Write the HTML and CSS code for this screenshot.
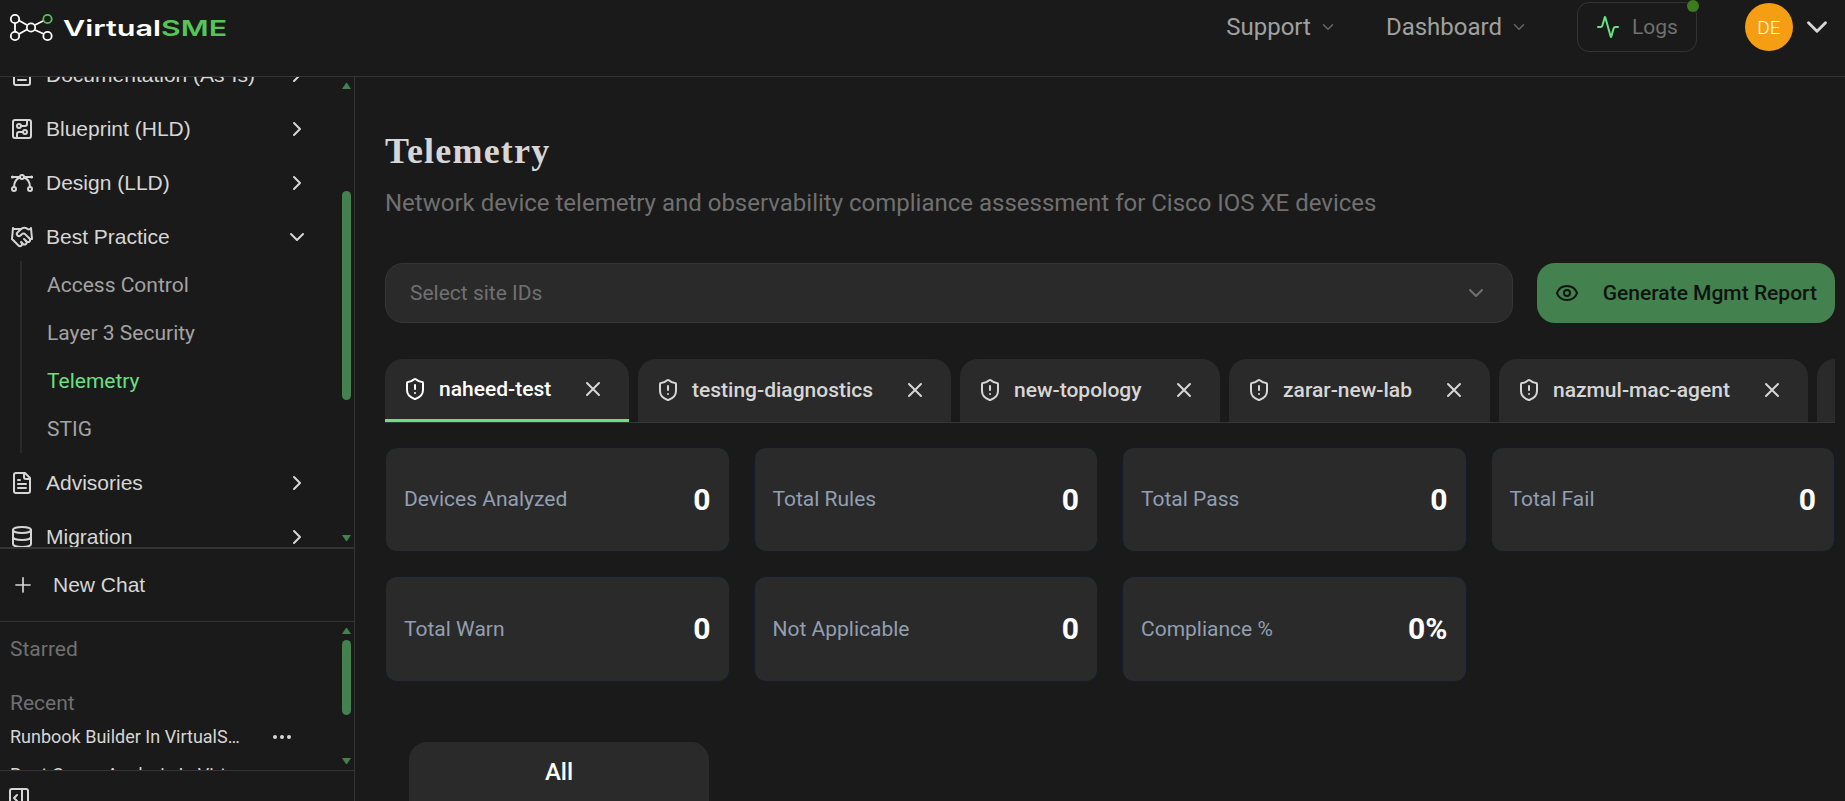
FILE: index.html
```html
<!DOCTYPE html>
<html lang="en">
<head>
<meta charset="utf-8">
<title>VirtualSME</title>
<link rel="stylesheet" href="styles.css">
</head>
<body>
<svg class="defs" aria-hidden="true">
  <symbol id="right" viewBox="0 0 24 24"><path d="m9 18 6-6-6-6"/></symbol>
  <symbol id="down" viewBox="0 0 24 24"><path d="m6 9 6 6 6-6"/></symbol>
  <symbol id="x" viewBox="0 0 24 24"><path d="M18 6 6 18M6 6l12 12"/></symbol>
  <symbol id="file" viewBox="0 0 24 24"><path d="M15 2H6a2 2 0 0 0-2 2v16a2 2 0 0 0 2 2h12a2 2 0 0 0 2-2V7Z"/><path d="M14 2v4a2 2 0 0 0 2 2h4M10 9H8M16 13H8M16 17H8"/></symbol>
  <symbol id="circuit" viewBox="0 0 24 24"><rect width="18" height="18" x="3" y="3" rx="2"/><path d="M11 9h4a2 2 0 0 0 2-2V3"/><circle cx="9" cy="9" r="2"/><path d="M7 21v-4a2 2 0 0 1 2-2h4"/><circle cx="15" cy="15" r="2"/></symbol>
  <symbol id="bezier" viewBox="0 0 24 24"><circle cx="12" cy="6" r="2"/><circle cx="4" cy="18" r="2"/><circle cx="20" cy="18" r="2"/><path d="M2 6h8M14 6h8M4 16c0-5 2-8 6-9.500M20 16c0-5-2-8-6-9.500"/><circle cx="2.500" cy="6" r=".6"/><circle cx="21.500" cy="6" r=".6"/></symbol>
  <symbol id="hands" viewBox="0 0 24 24"><path d="m11 17 2 2a1 1 0 1 0 3-3"/><path d="m14 14 2.500 2.500a1 1 0 1 0 3-3l-3.880-3.880a3 3 0 0 0-4.240 0l-.88.88a1 1 0 1 1-3-3l2.810-2.810a5.790 5.790 0 0 1 7.060-.87l.47.280a2 2 0 0 0 1.420.25L21 4"/><path d="m21 3 1 11h-2M3 3 2 14l6.500 6.500a1 1 0 1 0 3-3M3 4h8"/></symbol>
  <symbol id="db" viewBox="0 0 24 24"><ellipse cx="12" cy="5" rx="9" ry="3"/><path d="M3 5v14a9 3 0 0 0 18 0V5M3 12a9 3 0 0 0 18 0"/></symbol>
  <symbol id="plus" viewBox="0 0 24 24"><path d="M3.500 12h17M12 3.500v17"/></symbol>
  <symbol id="panel" viewBox="0 0 24 24"><rect width="18" height="18" x="3" y="3" rx="2"/><path d="M15 3v18M10 9l-3 3 3 3"/></symbol>
  <symbol id="shield" viewBox="0 0 24 24"><path d="M20 13c0 5-3.500 7.500-7.660 8.950a1 1 0 0 1-.67-.01C7.500 20.500 4 18 4 13V6a1 1 0 0 1 1-1c2 0 4.500-1.200 6.240-2.720a1.170 1.170 0 0 1 1.520 0C14.510 3.810 17 5 19 5a1 1 0 0 1 1 1z"/><path d="M12 8v4M12 16h.01"/></symbol>
  <symbol id="eye" viewBox="0 0 24 24"><path d="M2.062 12.348a1 1 0 0 1 0-.696 10.750 10.750 0 0 1 19.876 0 1 1 0 0 1 0 .696 10.750 10.750 0 0 1-19.876 0"/><circle cx="12" cy="12" r="3"/></symbol>
  <symbol id="pulse" viewBox="0 0 24 24"><path d="M22 12h-2.480a2 2 0 0 0-1.930 1.460l-2.350 8.360a.25.25 0 0 1-.48 0L9.240 2.180a.25.25 0 0 0-.48 0l-2.350 8.360A2 2 0 0 1 4.490 12H2"/></symbol>
</svg>

<header class="header">
  <svg class="logo" viewBox="0 0 230 50" width="230" height="50">
    <g class="mesh"><path d="M15 23v9M19 20.500l8 4.500M19 34l8-4.500M35 25l9-4.500M35 30l9 4"/><circle cx="15" cy="19" r="4.200"/><circle cx="15" cy="36" r="4.200"/><circle cx="31" cy="27.500" r="4.200"/><circle cx="47.500" cy="36" r="4.200"/></g>
    <circle class="mesh mesh-green" cx="47.500" cy="19" r="4.200"/>
    <text class="word" x="63" y="36" textLength="98" lengthAdjust="spacingAndGlyphs">Virtual</text>
    <text class="word word-green" x="161" y="36" textLength="66" lengthAdjust="spacingAndGlyphs">SME</text>
  </svg>
  <nav class="topnav">
    <span class="toplink">Support <svg class="icon i18"><use href="#down"/></svg></span>
    <span class="toplink">Dashboard <svg class="icon i18"><use href="#down"/></svg></span>
    <span class="logs"><svg class="icon pulse"><use href="#pulse"/></svg>Logs<i class="dot"></i></span>
    <span class="avatar">DE</span>
    <svg class="icon caret"><use href="#down"/></svg>
  </nav>
</header>

<div class="body">
  <aside class="sidebar">
    <div class="menu">
      <div class="menu-items">
        <div class="row"><svg class="icon"><use href="#file"/></svg><span>Documentation (As-Is)</span><svg class="icon"><use href="#right"/></svg></div>
        <div class="row"><svg class="icon"><use href="#circuit"/></svg><span>Blueprint (HLD)</span><svg class="icon"><use href="#right"/></svg></div>
        <div class="row"><svg class="icon"><use href="#bezier"/></svg><span>Design (LLD)</span><svg class="icon"><use href="#right"/></svg></div>
        <div class="row"><svg class="icon"><use href="#hands"/></svg><span>Best Practice</span><svg class="icon"><use href="#down"/></svg></div>
        <div class="subs">
          <div class="sub">Access Control</div>
          <div class="sub">Layer 3 Security</div>
          <div class="sub active">Telemetry</div>
          <div class="sub">STIG</div>
        </div>
        <div class="row"><svg class="icon"><use href="#file"/></svg><span>Advisories</span><svg class="icon"><use href="#right"/></svg></div>
        <div class="row"><svg class="icon"><use href="#db"/></svg><span>Migration</span><svg class="icon"><use href="#right"/></svg></div>
      </div>
      <div class="bar bar-menu"><i class="up"></i><i class="thumb"></i><i class="dn"></i></div>
    </div>
    <div class="newchat"><svg class="icon"><use href="#plus"/></svg><span>New Chat</span></div>
    <div class="chats">
      <div class="chat-list">
        <div class="group">Starred</div>
        <div class="group recent">Recent</div>
        <div class="chat"><span>Runbook Builder In VirtualS…</span><svg class="more" viewBox="0 0 20 6"><circle cx="3" cy="3" r="2"/><circle cx="10" cy="3" r="2"/><circle cx="17" cy="3" r="2"/></svg></div>
        <div class="chat"><span>Root Cause Analysis In Virt…</span></div>
      </div>
      <div class="bar bar-chats"><i class="up"></i><i class="thumb"></i><i class="dn"></i></div>
    </div>
    <div class="foot"><svg class="icon"><use href="#panel"/></svg></div>
  </aside>

  <main class="main">
    <h1 class="title">Telemetry</h1>
    <p class="lead">Network device telemetry and observability compliance assessment for Cisco IOS XE devices</p>
    <div class="filters">
      <div class="select"><span>Select site IDs</span><svg class="icon"><use href="#down"/></svg></div>
      <div class="button"><svg class="icon"><use href="#eye"/></svg><span>Generate Mgmt Report</span></div>
    </div>
    <div class="tabs">
      <div class="tab current t1"><svg class="icon"><use href="#shield"/></svg><span>naheed-test</span><svg class="icon close"><use href="#x"/></svg></div>
      <div class="tab t2"><svg class="icon"><use href="#shield"/></svg><span>testing-diagnostics</span><svg class="icon close"><use href="#x"/></svg></div>
      <div class="tab t3"><svg class="icon"><use href="#shield"/></svg><span>new-topology</span><svg class="icon close"><use href="#x"/></svg></div>
      <div class="tab t4"><svg class="icon"><use href="#shield"/></svg><span>zarar-new-lab</span><svg class="icon close"><use href="#x"/></svg></div>
      <div class="tab t5"><svg class="icon"><use href="#shield"/></svg><span>nazmul-mac-agent</span><svg class="icon close"><use href="#x"/></svg></div>
      <div class="tab t6"></div>
    </div>
    <div class="stats">
      <div class="stat"><span>Devices Analyzed</span><b>0</b></div>
      <div class="stat"><span>Total Rules</span><b>0</b></div>
      <div class="stat"><span>Total Pass</span><b>0</b></div>
      <div class="stat"><span>Total Fail</span><b>0</b></div>
      <div class="stat"><span>Total Warn</span><b>0</b></div>
      <div class="stat"><span>Not Applicable</span><b>0</b></div>
      <div class="stat"><span>Compliance %</span><b>0%</b></div>
    </div>
    <div class="all">All</div>
  </main>
</div>
</body>
</html>
```
FILE: styles.css
```css
* { box-sizing: border-box; }
body { margin: 0; height: 801px; overflow: hidden; background: #1a1a1a; color: #d6d6d6; font-family: Roboto, sans-serif; font-size: 21px; display: flex; flex-direction: column; }
.defs { position: absolute; width: 0; height: 0; }
.icon { width: 24px; height: 24px; flex: none; fill: none; stroke: currentColor; stroke-width: 2; stroke-linecap: round; stroke-linejoin: round; }
.header { height: 77px; flex: none; border-bottom: 1px solid #343434; display: flex; justify-content: space-between; align-items: flex-start; }
.logo { display: block; }
.mesh { fill: none; stroke: #fff; stroke-width: 1.8; }
.mesh-green { stroke: #4fc653; }
.word { font-family: Inter, sans-serif; font-weight: 600; font-size: 22px; fill: #fff; }
.word-green { fill: #56c557; }
.topnav { display: flex; align-items: center; height: 52px; padding-top: 2px; padding-right: 11px; }
.toplink { display: flex; align-items: center; gap: 8px; font-size: 24px; color: #a0a0a0; margin-right: 49px; }
.i18 { width: 18px; height: 18px; color: #666; }
.logs { position: relative; display: flex; align-items: center; gap: 12px; width: 120px; height: 50px; padding-left: 18px; border: 1px solid #343434; border-radius: 12px; color: #707070; margin-right: 48px; }
.pulse { color: #68e083; }
.dot { position: absolute; right: -3px; top: -3px; width: 12px; height: 12px; border-radius: 50%; background: #3e7b1d; }
.avatar { width: 48px; height: 48px; border-radius: 50%; background: #f59e13; color: #fff; font-size: 19px; font-weight: 300; display: flex; align-items: center; justify-content: center; margin-right: 7px; }
.caret { width: 34px; height: 34px; }
.body { flex: 1; display: flex; min-height: 0; }
.sidebar { width: 355px; flex: none; border-right: 1px solid #343434; display: flex; flex-direction: column; }
.menu { height: 472px; border-bottom: 2px solid #343434; display: flex; overflow: hidden; flex: none; }
.menu-items { width: 342px; margin-top: -29px; padding: 0 33px 0 10px; flex: none; }
.row { height: 54px; display: flex; align-items: center; font-family: "Liberation Sans", Arial, sans-serif; }
.row span { flex: 1; padding-left: 12px; }
.subs { margin: -3px 0 3px 10px; padding-left: 25px; border-left: 2px solid #2a2a2a; }
.sub { height: 48px; line-height: 48px; color: #a3a3a3; }
.sub.active { color: #68e083; }
.bar { width: 9px; display: flex; flex-direction: column; }
.up { border: 4.500px solid transparent; border-top: 0; border-bottom: 6px solid #43814f; }
.dn { border: 4.500px solid transparent; border-bottom: 0; border-top: 6px solid #43814f; }
.thumb { border-radius: 5px; background: #43814f; }
.bar-menu { padding-top: 6px; }
.bar-menu .thumb { height: 209px; margin: 102px 0 135px; }
.newchat { height: 73px; flex: none; border-bottom: 1px solid #343434; display: flex; align-items: center; padding-left: 13px; gap: 20px; font-family: "Liberation Sans", Arial, sans-serif; }
.newchat .icon { width: 20px; height: 20px; }
.chats { height: 149px; flex: none; border-bottom: 1px solid #343434; display: flex; overflow: hidden; }
.chat-list { width: 342px; flex: none; padding: 0 50px 0 10px; }
.group { height: 54px; line-height: 54px; color: #707070; }
.recent { height: 48px; }
.chat { height: 38px; line-height: 26px; font-size: 18px; display: flex; justify-content: space-between; }
.more { width: 20px; height: 6px; margin-top: 10px; fill: #d6d6d6; }
.bar-chats { padding-top: 6px; }
.bar-chats .thumb { height: 75px; margin: 6px 0 43px; }
.foot { padding: 15px 7px; }
.main { flex: 1; min-width: 0; padding: 54px 10px 0 30px; overflow: hidden; }
.title { margin: 0; font: 700 36px/40px "Liberation Serif", serif; letter-spacing: 1.2px; }
.lead { margin: 16px 0 0; font-size: 24px; line-height: 32px; color: #707070; }
.filters { display: flex; gap: 24px; height: 60px; margin-top: 44px; }
.select { flex: 1; display: flex; align-items: center; justify-content: space-between; padding: 0 24px; background: #2a2a2a; border: 1px solid #363636; border-radius: 18px; color: #707070; }
.button { width: 298px; display: flex; align-items: center; justify-content: space-between; padding: 0 18px; background: #43814f; color: #101410; border-radius: 18px; font-weight: 500; }
.tabs { margin-top: 36px; height: 64px; display: flex; gap: 9px; overflow: hidden; border-bottom: 1px solid #363636; }
.tab { flex: none; height: 63px; padding: 0 24px 2px 18px; background: #2a2a2a; border-radius: 18px 18px 0 0; display: flex; align-items: center; font-weight: 500; }
.tab span { flex: 1; padding-left: 12px; }
.close { color: #d6d6d6; }
.current { border-bottom: 3px solid #68e083; color: #fff; padding-bottom: 0; }
.t1 { width: 244px; } .t2 { width: 313px; } .t3 { width: 260px; } .t4 { width: 261px; } .t5 { width: 309px; } .t6 { width: 100px; }
.stats { display: grid; grid-template-columns: repeat(4, 1fr); grid-template-rows: 105px 106px; gap: 24px; margin-top: 24px; }
.stat { display: flex; align-items: center; justify-content: space-between; padding: 0 18px 1px; background: #2a2a2a; border: 1px solid #151b29; border-radius: 12px; color: #929fb1; }
.stat b { font-size: 30px; color: #fff; }
.all { margin: 60px 0 0 24px; width: 300px; height: 80px; padding-top: 15px; background: #2a2a2a; border-radius: 18px 18px 0 0; text-align: center; line-height: 30px; font-size: 24px; font-weight: 500; color: #fff; }
```
